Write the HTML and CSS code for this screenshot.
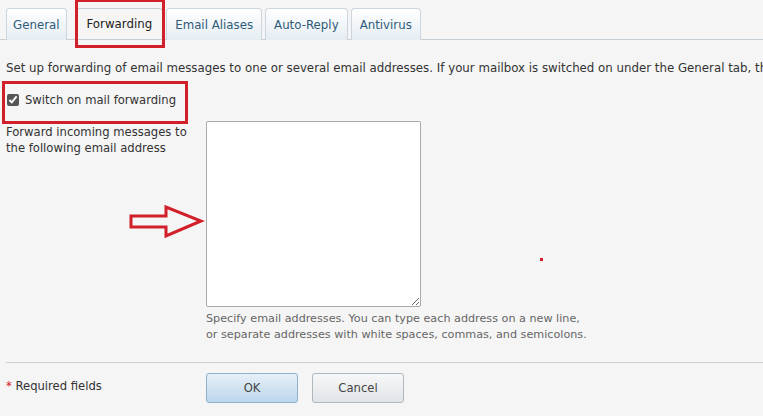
FILE: index.html
```html
<!DOCTYPE html>
<html>
<head>
    <title>Mail settings - Forwarding</title>
    <link rel="stylesheet" href="styles.css">
</head>
<body>
    <div class="tabs">
        <a class="tab">General</a>
        <a class="tab active">Forwarding<span class="mark mark-tab"></span></a>
        <a class="tab">Email Aliases</a>
        <a class="tab">Auto-Reply</a>
        <a class="tab">Antivirus</a>
    </div>

    <div class="content">
        <p class="intro">Set up forwarding of email messages to one or several email addresses. If your mailbox is switched on under the General tab, the messages will be stored in the mailbox as well.</p>

        <!-- switch -->
        <div class="switch-row">
            <label class="switch"><input type="checkbox" checked> Switch on mail forwarding</label>
            <span class="mark mark-switch"></span>
        </div>

        <!-- addresses -->
        <div class="form-row">
            <div class="label">Forward incoming messages to the following email address</div>
            <div class="field">
                <div class="area-wrap">
                    <textarea class="addresses"></textarea>
                    <svg class="arrow" width="76" height="34" viewBox="0 0 76 34">
                        <path d="M2 11 H37 V2 L72 16 L37 31 V22 H2 Z" fill="none" stroke="#d2202a" stroke-width="3"/>
                    </svg>
                </div>
                <div class="hint">Specify email addresses. You can type each address on a new line,<br>or separate addresses with white spaces, commas, and semicolons.</div>
            </div>
        </div>

        <div class="dot"></div>

        <div class="footer">
            <div class="required"><span class="star">*</span> Required fields</div>
            <div class="buttons">
                <button class="btn btn-ok">OK</button>
                <button class="btn">Cancel</button>
            </div>
        </div>
    </div>
</body>
</html>
```
FILE: styles.css
```css
body {
    margin: 0;
    padding: 0;
    background: #f5f5f5;
    color: #333;
    font-family: "DejaVu Sans", Verdana, sans-serif;
    font-size: 11.6px;
    overflow: hidden;
}
.tabs {
    display: flex;
    gap: 3px;
    padding: 8px 0 0 6px;
    border-bottom: 1px solid #c8cfd4;
    height: 31px;
}
.tab {
    position: relative;
    display: flex;
    align-items: center;
    padding: 0 8px;
    margin-bottom: -1px;
    border: 1px solid #cbd6de;
    border-bottom: none;
    border-radius: 4px 4px 0 0;
    background: linear-gradient(#ffffff, #e5edf2);
    color: #2f5b79;
    font-size: 11.8px;
}
.tab:first-child {
    padding: 0 6px;
}
.tab.active {
    background: #f5f5f5;
    border-color: #c8cfd4;
    color: #222;
    margin: 0 0 0 6px;
    padding: 0 10px;
}
.mark {
    position: absolute;
    border: 3px solid #d2202a;
}
.mark-tab {
    left: -2px;
    right: -3px;
    top: -10px;
    bottom: -9px;
}
.content {
    padding: 0 0 0 6px;
}
.intro {
    margin: 21px 0 0;
    white-space: nowrap;
    overflow: hidden;
    font-size: 11.8px;
    line-height: 14px;
}
.switch-row {
    position: relative;
    padding: 18px 0 0 0;
    height: 28px;
}
.switch {
    display: flex;
    align-items: center;
    gap: 6px;
}
.switch input {
    margin: 0 0 0 1px;
    width: 12px;
    height: 12px;
    accent-color: #555;
}
.mark-switch {
    left: -4px;
    top: 6px;
    width: 180px;
    height: 37px;
}
.form-row {
    display: grid;
    grid-template-columns: 200px 1fr;
}
.label {
    line-height: 16px;
    width: 190px;
    margin-top: 3px;
}
.area-wrap {
    position: relative;
}
.addresses {
    display: block;
    width: 215px;
    height: 186px;
    margin: 0;
    padding: 2px;
    box-sizing: border-box;
    border: 1px solid #a9a9a9;
    border-radius: 2px;
    background: #fff;
}
.arrow {
    position: absolute;
    left: -77px;
    top: 84px;
}
.hint {
    margin-top: 4px;
    color: #666;
    font-size: 11.2px;
    line-height: 16px;
}
.dot {
    position: absolute;
    left: 540px;
    top: 258px;
    width: 3px;
    height: 3px;
    background: #d2202a;
}
.footer {
    display: grid;
    grid-template-columns: 200px 1fr;
    margin-top: 19px;
    padding-top: 10px;
    border-top: 1px solid #cfcfcf;
}
.required {
    margin-top: 6px;
}
.star {
    color: #d2202a;
}
.buttons {
    display: flex;
    gap: 14px;
}
.btn {
    width: 92px;
    height: 30px;
    border: 1px solid #b0b8bf;
    border-radius: 3px;
    background: linear-gradient(#f6f7f8, #e1e4e7);
    color: #444;
    font-family: inherit;
    font-size: 11.6px;
}
.btn-ok {
    border-color: #8fb0c8;
    background: linear-gradient(#e6f0f8, #bcd6ec);
}
```
